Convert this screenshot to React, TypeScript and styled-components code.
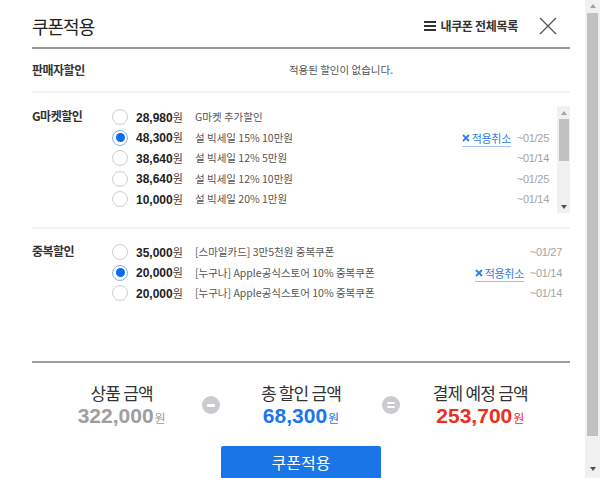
import React from "react";
import styled, { createGlobalStyle } from "styled-components";

const Global = createGlobalStyle`
  html, body { margin: 0; padding: 0; background: #fff; }
  body { font-family: "Noto Sans CJK KR", "Liberation Sans", sans-serif; color: #222; }
  * { box-sizing: border-box; }
`;

const KR = `"Noto Sans CJK KR", "Liberation Sans", sans-serif`;
const NUM = `"Liberation Sans", "Noto Sans CJK KR", sans-serif`;

const Page = styled.div`
  display: flex;
  width: 600px;
  height: 478px;
  overflow: hidden;
`;

const Main = styled.div`
  flex: 1;
  display: flex;
  flex-direction: column;
  padding: 0 15px 0 32px;
  min-width: 0;
`;

const Header = styled.header`
  display: flex;
  align-items: center;
  height: 49px;
  padding-top: 4px;
  border-bottom: 2px solid #9c9c9c;
  flex-shrink: 0;
`;

const Title = styled.h1`
  margin: 0;
  flex: 1;
  font: 400 18px/24px ${KR};
  letter-spacing: -1px;
  color: #222;
`;

const AllList = styled.span`
  display: flex;
  align-items: center;
  gap: 4px;
  font: 700 12px/16px ${KR};
  letter-spacing: -0.3px;
  color: #333;
  margin-right: 21px;
`;

const CloseBtn = styled.span`
  display: flex;
  width: 18px;
  height: 18px;
  margin-right: 13px;
`;

const Section = styled.section<{ $pt: number; $pb: number; $h?: number; $line?: boolean }>`
  display: flex;
  flex-shrink: 0;
  padding: ${(p) => p.$pt}px 0 ${(p) => p.$pb}px;
  height: ${(p) => (p.$h ? `${p.$h}px` : "auto")};
  border-bottom: ${(p) => (p.$line ? "2px solid #f3f3f3" : "none")};
`;

const Label = styled.div<{ $lh: number }>`
  width: 80px;
  flex-shrink: 0;
  font: 700 12px/${(p) => p.$lh}px ${KR};
  letter-spacing: -0.5px;
  color: #333;
`;

const Message = styled.div`
  flex: 1;
  text-align: center;
  font: 400 10.5px/42px ${KR};
  color: #555;
`;

const ListBox = styled.div<{ $h?: number }>`
  flex: 1;
  display: flex;
  height: ${(p) => (p.$h ? `${p.$h}px` : "auto")};
  overflow: hidden;
`;

const Rows = styled.div`
  flex: 1;
  padding-top: 1px;
  min-width: 0;
`;

const Row = styled.div`
  display: flex;
  align-items: center;
  height: 20.5px;
  padding-right: 8px;
`;

const Radio = styled.span<{ $on?: boolean }>`
  width: 16px;
  height: 16px;
  border-radius: 50%;
  flex-shrink: 0;
  margin-right: 8px;
  border: 1px solid ${(p) => (p.$on ? "#7fb2f5" : "#cfcfcf")};
  background: #fff;
  display: flex;
  align-items: center;
  justify-content: center;
  &::after {
    content: "";
    display: ${(p) => (p.$on ? "block" : "none")};
    width: 9px;
    height: 9px;
    border-radius: 50%;
    background: #0b6cf0;
  }
`;

const Amount = styled.span`
  width: 59px;
  flex-shrink: 0;
  white-space: nowrap;
  font: 700 12px/16px ${NUM};
  color: #222;
  b {
    font: 400 11px/16px ${KR};
    color: #444;
  }
`;

const Desc = styled.span`
  flex: 1;
  white-space: nowrap;
  font: 400 10.5px/16px ${KR};
  color: #555;
`;

const Cancel = styled.span`
  display: flex;
  align-items: center;
  gap: 2px;
  margin-right: 5px;
  font: 400 11px/14px ${KR};
  letter-spacing: -0.3px;
  color: #2f7fe8;
  border-bottom: 1px solid #9cc4f7;
  padding-bottom: 1px;
  margin-top: 3px;
`;

const DateText = styled.span`
  width: 33px;
  text-align: right;
  flex-shrink: 0;
  font: 400 11px/16px ${NUM};
  letter-spacing: -0.3px;
  color: #a3a3a3;
`;

const Track = styled.div<{ $w: number }>`
  width: ${(p) => p.$w}px;
  flex-shrink: 0;
  background: #f1f1f1;
  display: flex;
  flex-direction: column;
  align-items: center;
`;

const Arrow = styled.span<{ $down?: boolean; $dark?: boolean }>`
  width: 0;
  height: 0;
  border-left: 3.5px solid transparent;
  border-right: 3.5px solid transparent;
  ${(p) =>
    p.$down
      ? `border-top: 4px solid ${p.$dark ? "#505050" : "#a3a3a3"};`
      : `border-bottom: 4px solid ${p.$dark ? "#505050" : "#a3a3a3"};`}
`;

const Thumb = styled.span<{ $h: number; $w: number }>`
  width: ${(p) => p.$w}px;
  height: ${(p) => p.$h}px;
  background: #c1c1c1;
`;

const Spacer = styled.span<{ $h: number }>`
  height: ${(p) => p.$h}px;
  flex-shrink: 0;
`;

const Summary = styled.div`
  border-top: 2px solid #9c9c9c;
  padding-top: 18px;
  flex-shrink: 0;
`;

const SumGrid = styled.div`
  display: grid;
  grid-template-columns: 1fr 0 1fr 0 1fr;
  align-items: center;
`;

const SumCol = styled.div`
  display: flex;
  flex-direction: column;
  align-items: center;
`;

const SumLabel = styled.div`
  font: 400 17px/24px ${KR};
  letter-spacing: -0.8px;
  color: #333;
`;

const SumValue = styled.div<{ $c: string }>`
  font: 700 21px/22px ${NUM};
  color: ${(p) => p.$c};
  small {
    font: 400 12px/14px ${KR};
    margin-left: 1px;
  }
`;

const Op = styled.div`
  display: flex;
  justify-content: center;
  overflow: visible;
  width: 0;
  margin-top: 2px;
`;

const OpCircle = styled.span`
  flex-shrink: 0;
  width: 18px;
  height: 18px;
  border-radius: 50%;
  background: #cbcbcf;
  display: flex;
  flex-direction: column;
  align-items: center;
  justify-content: center;
  gap: 2px;
`;

const OpBar = styled.span<{ $h: number }>`
  width: 8px;
  height: ${(p) => p.$h}px;
  background: #fff;
  border-radius: 1px;
`;

const ButtonRow = styled.div`
  display: flex;
  justify-content: center;
  margin-top: 19px;
`;

const ApplyButton = styled.button`
  width: 160px;
  height: 32px;
  border: 0;
  border-radius: 2px 2px 0 0;
  padding: 0;
  background: #1a76e6;
  color: #fff;
  font: 400 16px/32px ${KR};
  text-align: center;
  display: block;
`;

const PageScroll = styled(Track)`
  padding: 4px 0 3px;
`;

type Item = { amt: string; desc: string; date?: string; on?: boolean; cancel?: boolean };

const gmarket: Item[] = [
  { amt: "28,980", desc: "G마켓 추가할인" },
  { amt: "48,300", desc: "설 빅세일 15% 10만원", date: "~01/25", on: true, cancel: true },
  { amt: "38,640", desc: "설 빅세일 12% 5만원", date: "~01/14" },
  { amt: "38,640", desc: "설 빅세일 12% 10만원", date: "~01/25" },
  { amt: "10,000", desc: "설 빅세일 20% 1만원", date: "~01/14" },
];

const dup: Item[] = [
  { amt: "35,000", desc: "[스마일카드] 3만5천원 중복쿠폰", date: "~01/27" },
  { amt: "20,000", desc: "[누구나] Apple공식스토어 10% 중복쿠폰", date: "~01/14", on: true, cancel: true },
  { amt: "20,000", desc: "[누구나] Apple공식스토어 10% 중복쿠폰", date: "~01/14" },
];

const MenuIcon = () => (
  <svg width="12" height="10" viewBox="0 0 12 10">
    <rect x="0" y="0" width="12" height="2" fill="#333" />
    <rect x="0" y="4" width="12" height="2" fill="#333" />
    <rect x="0" y="8" width="12" height="2" fill="#333" />
  </svg>
);

const XIcon = () => (
  <svg width="18" height="18" viewBox="0 0 18 18">
    <path d="M1 1 L17 17 M17 1 L1 17" stroke="#555" strokeWidth="1.3" fill="none" />
  </svg>
);

const SmallX = () => (
  <svg width="8" height="8" viewBox="0 0 8 8">
    <path d="M1 1 L7 7 M7 1 L1 7" stroke="#2f7fe8" strokeWidth="1.8" fill="none" />
  </svg>
);

const CouponRow = ({ it }: { it: Item }) => (
  <Row>
    <Radio $on={it.on} />
    <Amount>
      {it.amt}
      <b>원</b>
    </Amount>
    <Desc>{it.desc}</Desc>
    {it.cancel && (
      <Cancel>
        <SmallX />
        적용취소
      </Cancel>
    )}
    {it.date && <DateText>{it.date}</DateText>}
  </Row>
);

export default function App() {
  return (
    <>
      <Global />
      <Page>
        <Main>
          <Header>
            <Title>쿠폰적용</Title>
            <AllList>
              <MenuIcon />
              내쿠폰 전체목록
            </AllList>
            <CloseBtn>
              <XIcon />
            </CloseBtn>
          </Header>

          <Section $pt={0} $pb={0} $line>
            <Label $lh={42}>판매자할인</Label>
            <Message>적용된 할인이 없습니다.</Message>
          </Section>

          <Section $pt={13} $pb={14} $line>
            <Label $lh={20}>G마켓할인</Label>
            <ListBox $h={107}>
              <Rows>
                {gmarket.map((it, i) => (
                  <CouponRow key={i} it={it} />
                ))}
              </Rows>
              <Track $w={13}>
                <Spacer $h={5} />
                <Arrow />
                <Spacer $h={4} />
                <Thumb $w={10} $h={42} />
                <Spacer $h={44} />
                <Arrow $down $dark />
              </Track>
            </ListBox>
          </Section>

          <Section $pt={12} $pb={0} $h={132}>
            <Label $lh={20}>중복할인</Label>
            <ListBox>
              <Rows>
                {dup.map((it, i) => (
                  <CouponRow key={i} it={it} />
                ))}
              </Rows>
            </ListBox>
          </Section>

          <Summary>
            <SumGrid>
              <SumCol>
                <SumLabel>상품 금액</SumLabel>
                <SumValue $c="#9e9e9e">
                  322,000<small>원</small>
                </SumValue>
              </SumCol>
              <Op>
                <OpCircle>
                  <OpBar $h={3} />
                </OpCircle>
              </Op>
              <SumCol>
                <SumLabel>총 할인 금액</SumLabel>
                <SumValue $c="#1877ee">
                  68,300<small>원</small>
                </SumValue>
              </SumCol>
              <Op>
                <OpCircle>
                  <OpBar $h={2} />
                  <OpBar $h={2} />
                </OpCircle>
              </Op>
              <SumCol>
                <SumLabel>결제 예정 금액</SumLabel>
                <SumValue $c="#ee2f1c">
                  253,700<small>원</small>
                </SumValue>
              </SumCol>
            </SumGrid>
            <ButtonRow>
              <ApplyButton>쿠폰적용</ApplyButton>
            </ButtonRow>
          </Summary>
        </Main>
        <PageScroll $w={15}>
          <Arrow />
          <Spacer $h={5} />
          <Thumb $w={11} $h={423} />
          <Spacer $h={31} />
          <Arrow $down $dark />
        </PageScroll>
      </Page>
    </>
  );
}
